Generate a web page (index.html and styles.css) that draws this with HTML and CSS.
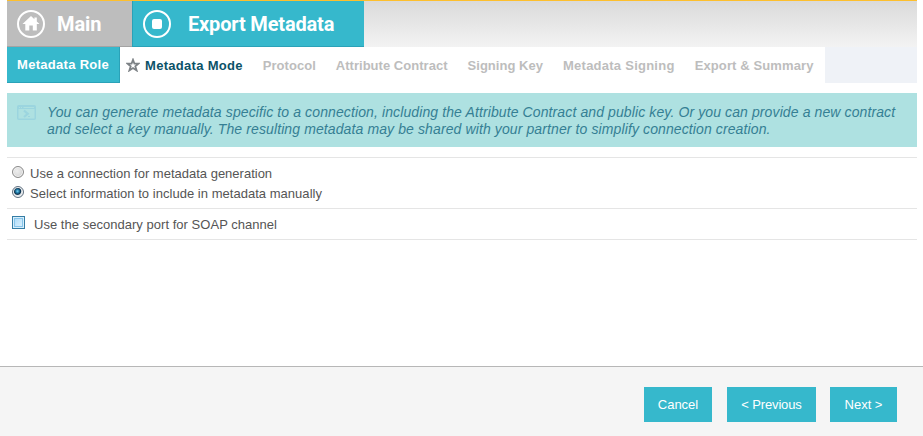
FILE: index.html
```html
<!DOCTYPE html>
<html lang="en">
  <head>
    <meta charset="UTF-8" />
    <meta name="viewport" content="width=device-width, initial-scale=1.0" />
    <title>Export Metadata</title>
    <link rel="stylesheet" href="styles.css">
  </head>
  <body>
    <div class="container">
      <nav class="tabs">
        <a class="tab tab-main">
          <svg class="tab-icon" viewBox="0 0 28 28">
            <circle cx="14" cy="14" r="13" fill="none" stroke="#fff" stroke-width="2" />
            <path d="M14 6 L5.5 14 H8.3 V20.5 H12.3 V15.5 H15.8 V20.5 H19.8 V14 H22.5 L19.8 11.4 V7.5 H17.4 V9.2 Z" fill="#fff" />
          </svg>
          <span class="tab-title">Main</span>
        </a>
        <a class="tab tab-active">
          <svg class="tab-icon" viewBox="0 0 28 28">
            <circle cx="14" cy="14" r="13" fill="none" stroke="#fff" stroke-width="2" />
            <rect x="9" y="9" width="10" height="10" rx="2" fill="#fff" />
          </svg>
          <span class="tab-title tab-title-export">Export Metadata</span>
        </a>
      </nav>

      <div class="steps">
        <a class="step step-done"><span>Metadata Role</span></a>
        <div class="step-list">
          <a class="step step-current">
            <svg class="star" viewBox="0 0 14 14">
              <path d="M7 1.8 L8.4 5.6 H12.4 L9.3 8.2 L10.6 12.4 L7 10 L3.4 12.4 L4.7 8.2 L1.6 5.6 H5.6 Z" fill="none" stroke="#7d8286" stroke-width="1.8" />
            </svg>
            <span>Metadata Mode</span>
          </a>
          <a class="step step-protocol"><span>Protocol</span></a>
          <a class="step step-contract"><span>Attribute Contract</span></a>
          <a class="step step-key"><span>Signing Key</span></a>
          <a class="step step-signing"><span>Metadata Signing</span></a>
          <a class="step step-summary"><span>Export &amp; Summary</span></a>
        </div>
      </div>

      <div class="info">
        <svg class="info-icon" viewBox="0 0 19 15">
          <rect x="0.75" y="0.75" width="17.5" height="13.5" rx="1" fill="none" stroke="#9bd5df" stroke-width="1.5" />
          <path d="M1 2.5 H18" stroke="#9bd5df" stroke-width="3" />
          <path d="M2 2.5 H3 M4 2.5 H5 M6.5 2.5 H17" stroke="#aee1e1" stroke-width="1" />
          <path d="M7 5.5 L10.8 8.8 L7 12" fill="none" stroke="#9bd5df" stroke-width="2.2" />
          <path d="M11 11.5 H13" stroke="#9bd5df" stroke-width="1" />
        </svg>
        <p class="info-text">
          <span class="info-line">You can generate metadata specific to a connection, including the Attribute Contract and public key. Or you can provide a new contract</span>
          <span class="info-line">and select a key manually. The resulting metadata may be shared with your partner to simplify connection creation.</span>
        </p>
      </div>

      <form class="options">
        <div class="option-group radios">
          <label class="option"><input type="radio" name="mode" /><span>Use a connection for metadata generation</span></label>
          <label class="option"><input type="radio" name="mode" checked /><span class="option-manual">Select information to include in metadata manually</span></label>
        </div>
        <div class="option-group checks">
          <label class="option"><input type="checkbox" name="soap" /><span class="option-manual">Use the secondary port for SOAP channel</span></label>
        </div>
      </form>
    </div>

    <footer class="footer">
      <button class="btn btn-cancel" type="button">Cancel</button>
      <button class="btn btn-previous" type="button">&lt; Previous</button>
      <button class="btn btn-next" type="button">Next &gt;</button>
    </footer>
  </body>
</html>
```
FILE: styles.css
```css
* {
  margin: 0;
  padding: 0;
  box-sizing: border-box;
}

body {
  background: #fff;
  height: 436px;
  display: flex;
  flex-direction: column;
  overflow: hidden;
  font-family: "Liberation Sans", Arial, sans-serif;
  font-size: 13px;
  color: #555;
}

.container {
  flex: 1;
  padding: 0 6px 0 7px;
}

/* main tabs */
.tabs {
  display: flex;
  height: 47px;
  border-top: 1px solid #fdbf2d;
  background: linear-gradient(#dadada, #f3f3f3);
}

.tab {
  display: flex;
  align-items: center;
  padding-left: 10px;
  color: #fff;
}

.tab-main {
  width: 125px;
  background: #bdbdbd;
  border-bottom: 1px solid #a3a3a3;
}

.tab-active {
  width: 232px;
  background: #36b8cc;
  border-left: 1px solid #2aa2b8;
  border-bottom: 1px solid #2aa2b8;
}

.tab-icon {
  width: 28px;
  height: 28px;
}

.tab-title {
  margin-left: 12px;
  font-family: Roboto, sans-serif;
  font-size: 20px;
  font-weight: 700;
  letter-spacing: -0.1px;
  white-space: nowrap;
}

.tab-title-export {
  margin-left: 17px;
  letter-spacing: -0.17px;
}

/* wizard steps */
.steps {
  display: flex;
  height: 36px;
  background: #eff2f7;
}

.step {
  display: flex;
  align-items: center;
  font-weight: 700;
  letter-spacing: 0.3px;
  white-space: nowrap;
  color: #bdbdbd;
}

.step-done {
  width: 113px;
  padding: 0 0 1px 10px;
  background: #36b8cc;
  border-right: 1px solid #2aa2b8;
  border-bottom: 1px solid #2aa2b8;
  color: #fff;
}

.step-list {
  display: flex;
  gap: 20px;
  width: 705px;
  padding-left: 6px;
  background: #fff;
}

.step-current {
  color: #0b5268;
}

.step-protocol,
.step-contract,
.step-key {
  letter-spacing: 0.03px;
}

.step-signing {
  letter-spacing: 0.25px;
}

.step-summary {
  letter-spacing: 0.12px;
}

.star {
  width: 14px;
  height: 14px;
  margin-right: 5px;
}

/* info message */
.info {
  display: flex;
  height: 54px;
  margin-top: 10px;
  padding: 11px 0 0 10px;
  background: #aee1e1;
}

.info-icon {
  width: 19px;
  height: 15px;
  margin-top: 1px;
}

.info-text {
  margin-left: 11px;
  font-size: 14px;
  font-style: italic;
  letter-spacing: 0.11px;
  line-height: 17px;
  color: #357f94;
}

.info-line {
  display: block;
  white-space: nowrap;
}

/* form */
.options {
  margin-top: 10px;
  border-top: 1px solid #e5e5e5;
}

.option-group {
  border-bottom: 1px solid #e5e5e5;
}

.radios {
  height: 51px;
  padding-top: 5px;
}

.checks {
  height: 31px;
  padding-top: 5px;
}

.option {
  display: flex;
  height: 20px;
  padding-left: 5px;
  line-height: 22px;
}

.option-manual {
  letter-spacing: 0.03px;
}

input {
  appearance: none;
  flex: none;
}

input[type="radio"] {
  width: 12px;
  height: 12px;
  margin: 3px 6px 0 0;
  border: 1px solid #8a8a8a;
  border-radius: 50%;
  background: radial-gradient(circle at 40% 40%, #eee, #ccc);
  box-shadow: inset 0 0 0 1px #f4f4f4;
}

input[type="radio"]:checked {
  border-color: #607080;
  background: radial-gradient(circle at 45% 42%, #7cd3f0 0, #2583b0 1.5px, #0b304c 3.2px, #dde3e8 4.2px);
}

input[type="checkbox"] {
  width: 13px;
  height: 13px;
  margin: 2px 9px 0 0;
  border: 1px solid #357da5;
  background: linear-gradient(135deg, #a5d8f8, #e3f4fe);
  box-shadow: inset 0 0 0 1px #d7eefb, inset 0 0 0 2px #86c4ea;
}

/* buttons */
.footer {
  display: flex;
  height: 70px;
  padding: 20px 0 0 644px;
  background: #f5f5f5;
  border-top: 1px solid #b7b7b7;
}

.btn {
  height: 35px;
  border: none;
  background: #36b8cc;
  color: #fff;
  font-family: inherit;
  font-size: 13px;
  white-space: nowrap;
}

.btn-cancel {
  width: 68px;
  margin-right: 15px;
}

.btn-previous {
  width: 89px;
  margin-right: 14px;
  letter-spacing: -0.15px;
}

.btn-next {
  width: 67px;
}
```
